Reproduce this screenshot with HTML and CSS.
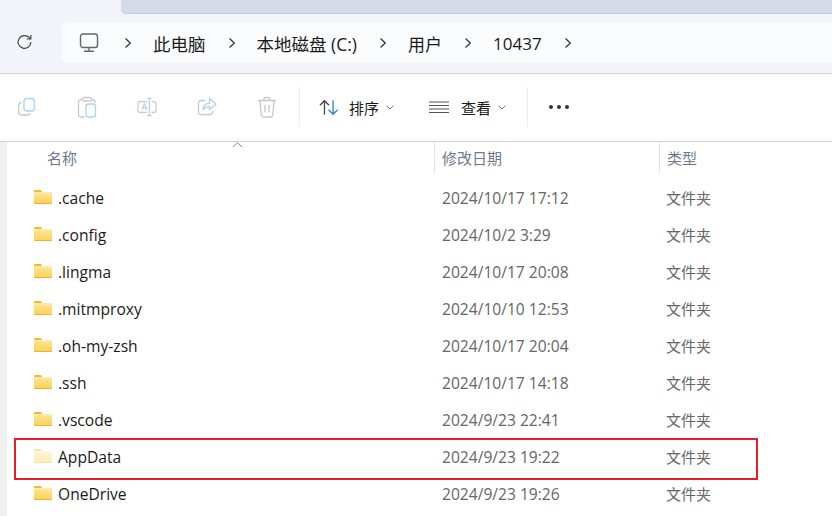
FILE: index.html
```html
<!DOCTYPE html>
<html lang="en">
<head>
    <meta charset="UTF-8">
    <title>10437</title>
    <link rel="stylesheet" href="styles.css">
</head>
<body>
    <div class="top-area">
        <div class="tab-strip"><div class="tab"></div></div>
        <div class="nav-row">
            <button class="refresh">
                <svg width="18" height="18" viewBox="0 0 18 18" fill="none" stroke="#444" stroke-width="1.2"><path d="M14.9 9a6.4 6.4 0 1 1-1.9-4.6l1.600 1.600"/><path d="M14.800 1.900V6h-4.100"/></svg>
            </button>
            <div class="address-bar">
                <svg class="pc-icon" width="20" height="20" viewBox="0 0 20 20" fill="none" stroke="#666" stroke-width="1.4"><rect x="1.500" y="1" width="17" height="13.500" rx="2.500"/><path d="M10 15v3M5 18.200h10"/></svg>
                <span class="sep"><svg width="8" height="12" viewBox="0 0 8 12" fill="none" stroke="#333" stroke-width="1.2"><path d="M1.500 1.500 6.300 6l-4.800 4.500"/></svg></span>
                <span class="crumb">此电脑</span>
                <span class="sep"><svg width="8" height="12" viewBox="0 0 8 12" fill="none" stroke="#333" stroke-width="1.2"><path d="M1.500 1.500 6.300 6l-4.800 4.500"/></svg></span>
                <span class="crumb">本地磁盘 (C:)</span>
                <span class="sep"><svg width="8" height="12" viewBox="0 0 8 12" fill="none" stroke="#333" stroke-width="1.2"><path d="M1.500 1.500 6.300 6l-4.800 4.500"/></svg></span>
                <span class="crumb short">用户</span>
                <span class="sep"><svg width="8" height="12" viewBox="0 0 8 12" fill="none" stroke="#333" stroke-width="1.2"><path d="M1.500 1.500 6.300 6l-4.800 4.500"/></svg></span>
                <span class="crumb short">10437</span>
                <span class="sep"><svg width="8" height="12" viewBox="0 0 8 12" fill="none" stroke="#333" stroke-width="1.2"><path d="M1.500 1.500 6.300 6l-4.800 4.500"/></svg></span>
            </div>
        </div>
    </div>

    <div class="toolbar">
        <div class="tool-group">
            <svg class="tool" viewBox="0 0 20 20" fill="none" stroke-width="1.3"><path d="M4.500 5.500h-.3A2.500 2.500 0 0 0 1.700 8v7.500A2.700 2.700 0 0 0 4.400 18h6.100a2.500 2.500 0 0 0 2.400-2" stroke="#c8c8c8"/><rect x="7" y="1.500" width="10.300" height="12.500" rx="2.600" stroke="#a9d3f5"/></svg>
            <svg class="tool" viewBox="0 0 20 22" fill="none" stroke-width="1.3"><path d="M5 3.500H4A2.500 2.500 0 0 0 1.500 6v12.500A2.500 2.500 0 0 0 4 21h3.500M15 3.500h.5A2.500 2.500 0 0 1 18 6v1" stroke="#c8c8c8"/><rect x="5.500" y="1.500" width="9" height="3.500" rx="1.500" stroke="#c8c8c8"/><rect x="9" y="8" width="9.500" height="13" rx="2.400" stroke="#a9d3f5"/></svg>
            <svg class="tool" viewBox="0 0 22 22" fill="none" stroke-width="1.3"><path d="M11 5H3.500A2.500 2.500 0 0 0 1 7.500v7A2.500 2.500 0 0 0 3.500 17H11M16 5h2.500A2.500 2.500 0 0 1 21 7.500v7a2.500 2.500 0 0 1-2.500 2.500H16" stroke="#c8c8c8"/><path d="M11 1.500h5M11 20.500h5M13.500 1.500v19M5.500 14l2.400-6.500h.6L10.900 14M6.300 12h3.800" stroke="#a9d3f5"/></svg>
            <svg class="tool" viewBox="0 0 20 20" fill="none" stroke-width="1.3"><path d="M8 3.500H4A2.500 2.500 0 0 0 1.500 6v9A2.500 2.500 0 0 0 4 17.500h9a2.500 2.500 0 0 0 2.500-2.500v-1" stroke="#c8c8c8"/><path d="M12.500 1.500 19 7.200l-6.500 5.300V9.600c-3 0-5 1-6.500 3.400.4-4 2.500-6.500 6.500-6.800Z" stroke="#a9d3f5"/></svg>
            <svg class="tool" viewBox="0 0 20 22" fill="none" stroke="#c8c8c8" stroke-width="1.3"><path d="M1 4.500h18M7 4.500V3a1.500 1.500 0 0 1 1.500-1.500h3A1.500 1.500 0 0 1 13 3v1.500M3 4.500l1.200 14A2.500 2.500 0 0 0 6.700 21h6.600a2.500 2.500 0 0 0 2.500-2.500l1.200-14M8 9v7.500M12 9v7.500"/></svg>
        </div>
        <div class="divider"></div>
        <div class="tool-menu sort-menu">
            <svg width="20" height="17" viewBox="0 0 22 18" fill="none" stroke-width="1.4"><path d="M6 17V1.500M1 6.500l5-5 5 5" stroke="#444"/><path d="M15.500 1v15.500M10.500 11.500l5 5 5-5" stroke="#1a84d8"/></svg>
            <span>排序</span>
            <svg class="chev" width="8" height="5" viewBox="0 0 8 5" fill="none" stroke="#777"><path d="M.7.700 4 4l3.300-3.300"/></svg>
        </div>
        <div class="tool-menu view-menu">
            <svg width="20" height="12" viewBox="0 0 20 12" fill="none" stroke="#555" stroke-width="1.2"><path d="M0 1h20M0 4.500h20M0 8h20M0 11.500h20"/></svg>
            <span>查看</span>
            <svg class="chev" width="8" height="5" viewBox="0 0 8 5" fill="none" stroke="#777"><path d="M.7.700 4 4l3.300-3.300"/></svg>
        </div>
        <div class="divider"></div>
        <div class="more"><i></i><i></i><i></i></div>
    </div>

    <div class="content">
        <div class="side-strip"></div>
        <div class="file-list">
            <div class="list-head">
                <div class="col-name">名称</div>
                <div class="col-date">修改日期</div>
                <div class="col-type">类型</div>
                <svg class="sort-arrow" width="11" height="6" viewBox="0 0 11 6" fill="none" stroke="#888"><path d="M.7 5.300 5.500.7l4.800 4.600"/></svg>
            </div>
            <div class="row"><div class="col-name"><span class="folder"></span>.cache</div><div class="col-date">2024/10/17 17:12</div><div class="col-type">文件夹</div></div>
            <div class="row"><div class="col-name"><span class="folder"></span>.config</div><div class="col-date">2024/10/2 3:29</div><div class="col-type">文件夹</div></div>
            <div class="row"><div class="col-name"><span class="folder"></span>.lingma</div><div class="col-date">2024/10/17 20:08</div><div class="col-type">文件夹</div></div>
            <div class="row"><div class="col-name"><span class="folder"></span>.mitmproxy</div><div class="col-date">2024/10/10 12:53</div><div class="col-type">文件夹</div></div>
            <div class="row"><div class="col-name"><span class="folder"></span>.oh-my-zsh</div><div class="col-date">2024/10/17 20:04</div><div class="col-type">文件夹</div></div>
            <div class="row"><div class="col-name"><span class="folder"></span>.ssh</div><div class="col-date">2024/10/17 14:18</div><div class="col-type">文件夹</div></div>
            <div class="row"><div class="col-name"><span class="folder"></span>.vscode</div><div class="col-date">2024/9/23 22:41</div><div class="col-type">文件夹</div></div>
            <div class="row marked"><div class="col-name"><span class="folder hidden"></span>AppData</div><div class="col-date">2024/9/23 19:22</div><div class="col-type">文件夹</div></div>
            <div class="row"><div class="col-name"><span class="folder"></span>OneDrive</div><div class="col-date">2024/9/23 19:26</div><div class="col-type">文件夹</div></div>
        </div>
    </div>
</body>
</html>
```

FILE: styles.css
```css
* {
    box-sizing: border-box;
}

html, body {
    height: 100%;
}

body {
    margin: 0;
    overflow: hidden;
    background-color: #ffffff;
    color: #1a1a1a;
    font-family: "Open Sans", "Noto Sans CJK SC", sans-serif;
    font-size: 15.6px;
}

.top-area {
    height: 74px;
    background-color: #f3f4f9;
    border-bottom: 1px solid #cfd1d6;
}

.tab-strip {
    height: 23px;
    padding-left: 121px;
}

.tab {
    height: 14px;
    background-color: #d3dbea;
    border-bottom: 1px solid #c4cde0;
    border-bottom-left-radius: 5px;
}

.nav-row {
    display: flex;
    align-items: center;
    height: 40px;
}

.refresh {
    width: 62px;
    height: 40px;
    padding: 0 0 0 16px;
    border: none;
    background: none;
    text-align: left;
}

.address-bar {
    flex: 1;
    display: flex;
    align-items: center;
    height: 40px;
    padding-left: 17px;
    background-color: #fbfcfe;
    border-radius: 6px 0 0 6px;
}

.sep {
    display: flex;
    width: 8px;
    margin: 0 21px 0 22px;
}

.pc-icon + .sep {
    margin-left: 25px;
}

.crumb {
    font-size: 17.5px;
    white-space: nowrap;
}

.crumb.short {
    font-size: 17px;
}

.toolbar {
    display: flex;
    align-items: center;
    height: 68px;
    padding-bottom: 1px;
    border-bottom: 1px solid #cfd1d6;
}

.tool-group {
    display: flex;
    align-items: center;
    width: 299px;
    padding-left: 17px;
    gap: 40px;
}

.tool {
    width: 20px;
    height: 22px;
}

.divider {
    width: 1px;
    height: 40px;
    background-color: #ececec;
}

.tool-menu {
    display: flex;
    align-items: center;
    font-size: 15px;
}

.sort-menu {
    width: 112px;
    padding-left: 19px;
}

.sort-menu span {
    margin-left: 10px;
}

.view-menu {
    width: 115px;
    padding-left: 17px;
}

.view-menu span {
    margin-left: 12px;
}

.chev {
    margin-left: 7px;
}

.more {
    display: flex;
    gap: 4px;
    padding-left: 21px;
}

.more i {
    width: 4px;
    height: 4px;
    border-radius: 50%;
    background-color: #333333;
}

.content {
    display: flex;
}

.side-strip {
    width: 7px;
    height: 374px;
    background-color: #f0f0f0;
}

.file-list {
    flex: 1;
}

.list-head {
    position: relative;
    display: flex;
    height: 32px;
    margin-bottom: 5px;
    font-size: 15px;
}

.sort-arrow {
    position: absolute;
    top: 0;
    left: 225px;
}

.list-head > div {
    padding-top: 5px;
    color: #6d7a8a;
}

.list-head .col-name {
    align-items: flex-start;
    padding-left: 40px;
}

.list-head .col-date,
.list-head .col-type {
    border-left: 1px solid #e5e5e5;
}

.list-head .col-date {
    padding-left: 7px;
}

.col-name {
    display: flex;
    align-items: center;
    width: 427px;
    white-space: nowrap;
}

.col-date {
    width: 225px;
    padding-left: 8px;
    color: #666666;
    white-space: nowrap;
}

.col-type {
    flex: 1;
    padding-left: 7px;
    color: #666666;
    font-size: 15px;
}

.row {
    position: relative;
    display: flex;
    align-items: center;
    height: 37px;
}

.row .col-name {
    padding-left: 27px;
}

.folder {
    position: relative;
    flex-shrink: 0;
    width: 18px;
    height: 12px;
    margin-right: 6px;
    background: linear-gradient(to bottom, #fde38a, #fbd35c);
    border-top: 2px solid #ffe9a6;
    border-bottom: 1px solid #efb42a;
}

.folder::before {
    content: "";
    position: absolute;
    top: -4px;
    left: 0;
    width: 8px;
    height: 2px;
    background-color: #f5b82e;
    border-radius: 1px 2px 0 0;
}

.folder.hidden {
    background: linear-gradient(to bottom, #fef4d2, #fdeeba);
    border-top-color: #fff6dc;
    border-bottom-color: #f8e0a0;
}

.folder.hidden::before {
    background-color: #fbe3a6;
}

/* red annotation box drawn over the AppData row */
.marked::after {
    content: "";
    position: absolute;
    top: 0;
    left: 7px;
    box-sizing: border-box;
    width: 744px;
    height: 42px;
    border: 2px solid #e81c2b;
}
```
